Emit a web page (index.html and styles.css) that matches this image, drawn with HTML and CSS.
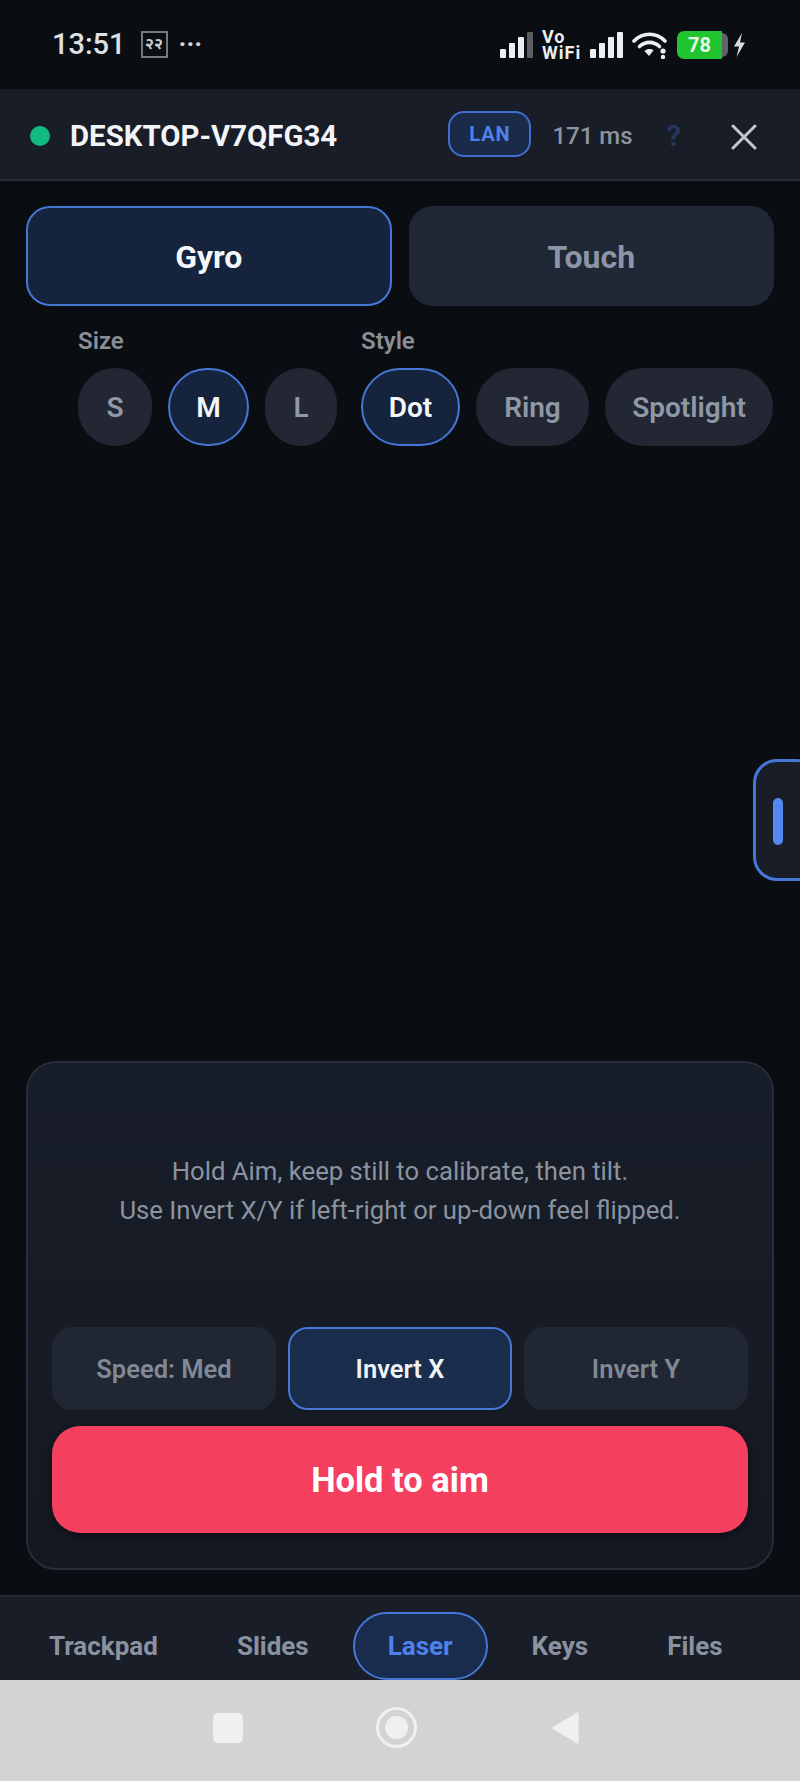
FILE: index.html
```html
<!DOCTYPE html>
<html lang="en">
<head>
<meta charset="utf-8">
<title>Laser</title>
<link rel="stylesheet" href="styles.css">
</head>
<body>
<div class="app">
  <div class="statusbar">
    <span class="clock">13:51</span>
    <span class="datebox">२२</span>
    <span class="more">···</span>
    <span class="status-right">
      <svg class="sig" width="34" height="28" viewBox="0 0 34 28"><rect x="0" y="18" width="6" height="9" rx="1" fill="#eceef0"/><rect x="9" y="12" width="6" height="15" rx="1" fill="#eceef0"/><rect x="18" y="6" width="6" height="21" rx="1" fill="#eceef0"/><rect x="27" y="1" width="6" height="26" rx="1" fill="#5a5d62"/></svg>
      <span class="vowifi">Vo<br>WiFi</span>
      <svg class="sig" width="34" height="28" viewBox="0 0 34 28"><rect x="0" y="18" width="6" height="9" rx="1" fill="#eceef0"/><rect x="9" y="12" width="6" height="15" rx="1" fill="#eceef0"/><rect x="18" y="6" width="6" height="21" rx="1" fill="#eceef0"/><rect x="27" y="1" width="6" height="26" rx="1" fill="#eceef0"/></svg>
      <svg class="wifi" width="36" height="28" viewBox="0 0 36 28"><path d="M2 10C11 1 24 1 33 10" fill="none" stroke="#eceef0" stroke-width="3.6" stroke-linecap="round"/><path d="M7.5 15.5C13.500 10 21.500 10 27.500 15.500" fill="none" stroke="#eceef0" stroke-width="3.6" stroke-linecap="round"/><path d="M12.500 20C15.500 17.500 19 17.500 21.500 19.500L17 25Z" fill="#eceef0"/><circle cx="31" cy="20" r="2.600" fill="#eceef0"/><circle cx="31" cy="26" r="2.200" fill="#eceef0"/></svg>
      <span class="battery"><span class="battery-fill">78</span><span class="battery-cap"></span></span>
      <svg class="bolt" width="13" height="24" viewBox="0 0 13 24"><path d="M9 0 1 13.500H6L3.500 24 12 9.500H7Z" fill="#d8dadc"/></svg>
    </span>
  </div>

  <header class="topbar">
    <span class="dot"></span>
    <span class="device">DESKTOP-V7QFG34</span>
    <span class="lan">LAN</span>
    <span class="ping">171 ms</span>
    <span class="help">?</span>
    <svg class="close" width="26" height="26" viewBox="0 0 26 26"><path d="M2 2 24 24M24 2 2 24" stroke="#c3c8cf" stroke-width="3" stroke-linecap="round"/></svg>
  </header>

  <main class="main">
    <div class="modes">
      <div class="mode active">Gyro</div>
      <div class="mode">Touch</div>
    </div>
    <div class="options">
      <div class="group">
        <div class="group-label">Size</div>
        <div class="chips size-chips">
          <div class="chip c-s">S</div>
          <div class="chip c-m active">M</div>
          <div class="chip c-l">L</div>
        </div>
      </div>
      <div class="group">
        <div class="group-label">Style</div>
        <div class="chips">
          <div class="chip c-dot active">Dot</div>
          <div class="chip c-ring">Ring</div>
          <div class="chip c-spot">Spotlight</div>
        </div>
      </div>
    </div>

    <div class="handle"><span class="handle-bar"></span></div>

    <section class="panel">
      <p class="hint">Hold Aim, keep still to calibrate, then tilt.<br>Use Invert X/Y if left-right or up-down feel flipped.</p>
      <div class="toggles">
        <div class="toggle">Speed: Med</div>
        <div class="toggle active">Invert X</div>
        <div class="toggle">Invert Y</div>
      </div>
      <div class="aim">Hold to aim</div>
    </section>
  </main>

  <nav class="tabs">
    <div class="tab">Trackpad</div>
    <div class="tab">Slides</div>
    <div class="tab active">Laser</div>
    <div class="tab">Keys</div>
    <div class="tab">Files</div>
  </nav>

  <div class="sysnav">
    <span class="sys-square"></span>
    <span class="sys-circle"><span class="sys-circle-in"></span></span>
    <svg class="sys-back" width="28" height="34" viewBox="0 0 28 34"><path d="M27 1.500V32.500L1 17Z" fill="#eff0f1" stroke="#eff0f1" stroke-linejoin="round"/></svg>
  </div>
</div>
</body>
</html>
```

FILE: styles.css
```css
* { box-sizing: border-box; }
html, body { margin: 0; padding: 0; }
body {
  background: #0a0d12;
  font-family: Roboto, "Noto Sans", "Noto Sans CJK SC", sans-serif;
  color: #fff;
}
.app {
  width: 800px;
  height: 1781px;
  display: flex;
  flex-direction: column;
  overflow: hidden;
}

/* status bar */
.statusbar {
  height: 89px;
  flex: none;
  display: flex;
  align-items: center;
  padding: 0 54px 0 52px;
  background: #0a0d12;
}
.clock { font-size: 29px; font-weight: 500; color: #dfe1e4; line-height: 1; }
.datebox {
  margin-left: 15px;
  width: 27px;
  height: 27px;
  border: 2px solid #77797d;
  font-size: 16px;
  font-weight: 700;
  line-height: 22px;
  text-align: center;
  color: #c9cbce;
  overflow: hidden;
}
.more {
  margin-left: 11px;
  font-size: 26px;
  font-weight: 700;
  line-height: 1;
  color: #d3d5d8;
  position: relative;
  top: -1px;
}
.status-right {
  margin-left: auto;
  display: flex;
  align-items: center;
}
.sig { display: block; }
.vowifi {
  margin-left: 8px;
  margin-right: 8px;
  width: 40px;
  font-size: 18px;
  font-weight: 700;
  letter-spacing: 1px;
  line-height: 16px;
  color: #eceef0;
  white-space: nowrap;
}
.wifi { margin-left: 8px; display: block; }
.battery { margin-left: 9px; display: flex; align-items: center; }
.battery-fill {
  width: 45px;
  height: 28px;
  border-radius: 7px 0 0 7px;
  background: #1fc42e;
  font-size: 20px;
  font-weight: 700;
  line-height: 28px;
  text-align: center;
  color: #e9fbe9;
}
.battery-cap {
  width: 6px;
  height: 24px;
  border-radius: 0 6px 6px 0;
  background: #5f6266;
}
.bolt { margin-left: 5px; display: block; }

/* header */
.topbar {
  height: 92px;
  flex: none;
  display: flex;
  align-items: center;
  padding: 3px 43px 0 30px;
  background: #181d27;
  border-bottom: 2px solid #272c37;
}
.dot { width: 20px; height: 20px; border-radius: 50%; background: #12b981; flex: none; }
.device { margin-left: 20px; font-size: 29.4px; font-weight: 700; color: #f2f4f7; white-space: nowrap; }
.lan {
  margin-left: auto;
  margin-bottom: 3px;
  width: 83px;
  height: 46px;
  border: 2px solid #3f6fcf;
  border-radius: 16px;
  background: #1a2a49;
  color: #4f81ea;
  font-size: 20px;
  font-weight: 700;
  letter-spacing: 1px;
  line-height: 42px;
  text-align: center;
}
.ping { margin-left: 21px; font-size: 24px; font-weight: 500; color: #8d949f; white-space: nowrap; }
.help { margin-left: 34px; font-size: 29px; font-weight: 700; color: #26365e; }
.close { margin-left: 50px; margin-top: 3px; display: block; flex: none; }

/* main */
.main {
  flex: 1;
  min-height: 0;
  position: relative;
  display: flex;
  flex-direction: column;
  padding: 25px 26px 25px;
}
.modes { display: grid; grid-template-columns: 1fr 1fr; gap: 17px; }
.mode {
  height: 100px;
  padding-top: 2px;
  border-radius: 24px;
  background: #202735;
  color: #8b95a5;
  font-size: 32px;
  font-weight: 700;
  display: flex;
  align-items: center;
  justify-content: center;
  border: 2px solid #202735;
}
.mode.active { background: #15243c; border-color: #4676d6; color: #f4f6f9; }

.options { display: flex; gap: 24px; margin-top: 21px; padding-left: 52px; }
.group-label { font-size: 24px; font-weight: 600; color: #8a8e96; line-height: 28px; }
.chips { display: flex; gap: 16px; margin-top: 13px; }
.size-chips { gap: 16px; }
.chip {
  height: 78px;
  border-radius: 39px;
  background: #222733;
  border: 2px solid #222733;
  color: #8f98a6;
  font-size: 28px;
  font-weight: 600;
  display: flex;
  align-items: center;
  justify-content: center;
}
.chip.active { background: #15243c; border-color: #4676d6; color: #f4f6f9; }
.c-s { width: 74px; }
.c-m { width: 81px; }
.c-l { width: 72px; }
.c-dot { width: 99px; }
.c-ring { width: 113px; }
.c-spot { width: 168px; }

.handle {
  position: absolute;
  right: -20px;
  top: 578px;
  width: 67px;
  height: 122px;
  border: 3px solid #4676d6;
  border-radius: 24px;
  background: #181d27;
  padding: 36px 0 0 17px;
}
.handle-bar { display: block; width: 10px; height: 47px; border-radius: 5px; background: #5586f2; }

.panel {
  margin-top: auto;
  height: 509px;
  border: 2px solid #262c38;
  border-radius: 30px;
  background: linear-gradient(#181e29, #141821);
  padding: 0 24px 35px;
  display: flex;
  flex-direction: column;
}
.hint {
  flex: 1;
  margin: 0;
  display: flex;
  align-items: center;
  justify-content: center;
  text-align: center;
  font-size: 25.7px;
  line-height: 39px;
  color: #8a93a0;
  padding-bottom: 8px;
  white-space: nowrap;
}
.toggles { display: grid; grid-template-columns: repeat(3, 1fr); gap: 12px; }
.toggle {
  height: 83px;
  border-radius: 20px;
  background: #202632;
  border: 2px solid #202632;
  color: #7f8997;
  font-size: 25.5px;
  font-weight: 600;
  display: flex;
  align-items: center;
  justify-content: center;
}
.toggle.active { background: #1b2d4c; border-color: #4676d6; color: #eef1f6; }
.aim {
  margin-top: 16px;
  height: 107px;
  border-radius: 28px;
  background: #f43f5e;
  color: #fff;
  font-size: 34.5px;
  font-weight: 700;
  display: flex;
  align-items: center;
  justify-content: center;
  box-shadow: 0 4px 10px rgba(0, 0, 0, 0.35);
}

/* tabs */
.tabs {
  height: 85px;
  flex: none;
  display: flex;
  gap: 9px;
  padding: 17px 0 0 14px;
  background: #181d27;
  border-top: 2px solid #262b36;
  overflow: hidden;
}
.tab {
  height: 68px;
  padding: 0 33px;
  border: 2px solid transparent;
  border-radius: 34px;
  color: #8a92a0;
  font-size: 26px;
  font-weight: 700;
  display: flex;
  align-items: center;
  margin-top: -2px;
}
.tab.active { background: #1a2c4e; border-color: #4676d6; color: #4f81ea; }

/* system nav */
.sysnav {
  height: 101px;
  flex: none;
  background: #d2d3d5;
  display: flex;
  align-items: center;
  padding: 0 0 6px 213px;
}
.sys-square { width: 30px; height: 30px; border-radius: 5px; background: #eff0f1; }
.sys-circle {
  margin-left: 133px;
  width: 41px;
  height: 41px;
  border-radius: 50%;
  border: 3px solid #eff0f1;
  display: flex;
  align-items: center;
  justify-content: center;
}
.sys-circle-in { width: 23px; height: 23px; border-radius: 50%; background: #eff0f1; }
.sys-back { margin-left: 134px; display: block; }
```
